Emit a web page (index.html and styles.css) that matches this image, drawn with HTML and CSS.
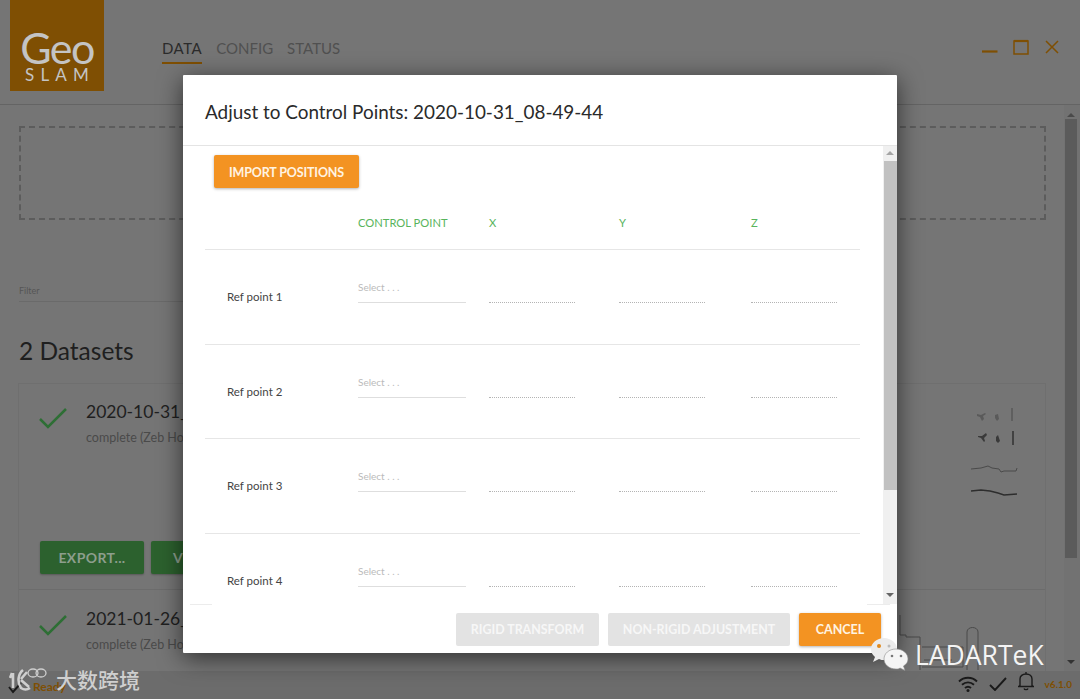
FILE: index.html
```html
<!DOCTYPE html>
<html lang="en">
<head>
<meta charset="utf-8">
<title>GeoSLAM Draw</title>
<link rel="stylesheet" href="styles.css">
</head>
<body>
<div class="app">
  <header class="topbar">
    <div class="logo">
      <span class="logo-geo">Geo</span>
      <span class="logo-slam">SLAM</span>
    </div>
    <nav class="tabs">
      <a class="tab active">DATA</a>
      <a class="tab">CONFIG</a>
      <a class="tab">STATUS</a>
    </nav>
    <div class="winctl">
      <svg width="16" height="16" viewBox="0 0 16 16"><path d="M0 12.5h15.500" class="wstroke"/></svg>
      <svg width="16" height="16" viewBox="0 0 16 16"><path d="M1 2h14v13H1z" class="wthin"/><path d="M1 2h14" class="wstroke"/></svg>
      <svg width="16" height="16" viewBox="0 0 16 16"><path d="M2 2l12 12M14 2L2 14" class="wthin"/></svg>
    </div>
  </header>
  <div class="workarea">
    <main class="content">
      <div class="dropzone"></div>
      <div class="filter"><span>Filter</span></div>
      <h2 class="count">2 Datasets</h2>
      <section class="cards">
        <article class="card card-first">
          <div class="card-head">
            <svg class="tick" width="28" height="22" viewBox="0 0 28 22"><path d="M1 12l8 8L27 2"/></svg>
            <div>
              <div class="ds-name">2020-10-31_08-49-44</div>
              <div class="ds-sub">complete (Zeb Horizon)</div>
            </div>
          </div>
          <div class="card-actions">
            <button class="btn-green">EXPORT...</button>
            <button class="btn-green wide">VISUALISE</button>
          </div>
          <svg class="thumb" width="50" height="92" viewBox="0 0 50 92">
            <path d="M6 6l4 1 4-2 1 1-3 2 1 3-2 2-2-4-3-1zM24 7l3-1 1 5-2 2-2-3z" class="blob1"/>
            <path d="M41 0v13" class="sk1"/>
            <path d="M7 28l4 0 4-3 1 2-3 3 1 3-1 1-3-4-3-1zM25 29l2-2 2 6-2 2-2-2z" class="blob2"/>
            <path d="M42 23v14" class="sk2"/>
            <path d="M0 61l10-1 7-2 4 2 7 1 2 3 3-1 12 0 1-3" class="sk1"/>
            <path d="M0 83l10-1 9 1 8 2 6 2 13-1" class="sk2"/>
          </svg>
        </article>
        <article class="card card-second">
          <div class="card-head">
            <svg class="tick" width="28" height="22" viewBox="0 0 28 22"><path d="M1 12l8 8L27 2"/></svg>
            <div>
              <div class="ds-name">2021-01-26_10-12-30</div>
              <div class="ds-sub">complete (Zeb Horizon)</div>
            </div>
          </div>
          <svg class="plan" width="110" height="62" viewBox="0 0 110 62">
            <path d="M10 5v20h6v2h14v33M32 37h41v20H32M34 50h28M77 60V22c0-6 11-6 11 0v38" class="sk1"/>
          </svg>
        </article>
      </section>
    </main>
    <div class="scrollbar outer">
      <span class="arrow up"></span>
      <span class="thumb-bar"></span>
      <span class="arrow down"></span>
    </div>
  </div>
  <footer class="statusbar">
    <div class="status-left">
      <svg width="14" height="12" viewBox="0 0 14 12"><path d="M1 5l4 5 8-9" class="sb-stroke"/></svg>
      <span class="ready">Ready</span>
    </div>
    <div class="status-right">
      <svg width="20" height="16" viewBox="0 0 20 16"><path d="M1 5.500c5-5 13-5 18 0M4 8.800c3.500-3.300 8.500-3.300 12 0M7 12c1.800-1.600 4.200-1.600 6 0" class="sb-stroke"/><circle cx="10" cy="14.500" r="1.500" fill="#1a1a1a"/></svg>
      <svg width="18" height="14" viewBox="0 0 18 14"><path d="M1 8l5 5L17 1" class="sb-stroke"/></svg>
      <svg class="bell" width="16" height="20" viewBox="0 0 16 20"><path d="M2 14.500V8c0-3 2.500-5 6-5s6 2 6 5v6.500l1.500 1H.5zM8 1v2M6 17.500c.5 1.500 3.500 1.500 4 0" class="sb-stroke thin"/></svg>
      <span class="version">v6.1.0</span>
    </div>
  </footer>

  <div class="modal" role="dialog">
    <div class="modal-head">Adjust to Control Points: 2020-10-31_08-49-44</div>
    <div class="modal-body">
      <div class="modal-scroll">
        <button class="btn-orange import">IMPORT POSITIONS</button>
        <div class="grid head-row">
          <span></span><span>CONTROL POINT</span><span>X</span><span>Y</span><span>Z</span>
        </div>
        <div class="grid row">
          <span class="ref">Ref point 1</span>
          <span class="field select">Select . . .</span><span class="field dotted"></span><span class="field dotted"></span><span class="field dotted"></span>
        </div>
        <div class="grid row">
          <span class="ref">Ref point 2</span>
          <span class="field select">Select . . .</span><span class="field dotted"></span><span class="field dotted"></span><span class="field dotted"></span>
        </div>
        <div class="grid row">
          <span class="ref">Ref point 3</span>
          <span class="field select">Select . . .</span><span class="field dotted"></span><span class="field dotted"></span><span class="field dotted"></span>
        </div>
        <div class="grid row">
          <span class="ref">Ref point 4</span>
          <span class="field select">Select . . .</span><span class="field dotted"></span><span class="field dotted"></span><span class="field dotted"></span>
        </div>
      </div>
      <div class="scrollbar inner">
        <span class="arrow up"></span>
        <span class="thumb-bar"></span>
        <span class="arrow down"></span>
      </div>
    </div>
    <div class="modal-foot">
      <button class="btn-disabled rigid">RIGID TRANSFORM</button>
      <button class="btn-disabled nonrigid">NON-RIGID ADJUSTMENT</button>
      <button class="btn-orange cancel">CANCEL</button>
    </div>
  </div>

  <div class="mark mark-left">
    <svg width="38" height="25" viewBox="0 0 38 25">
      <path d="M3 6L1 11M4 6v15" class="mk"/>
      <path d="M14 3c-5 4-6 12-2 18 3 2 6 2 9 0M12 12l6-7M12 13l8 7" class="mk"/>
      <ellipse cx="24" cy="6" rx="5" ry="4" class="mk thin"/><ellipse cx="32" cy="6" rx="5" ry="4" class="mk thin"/>
    </svg>
    <span>大数跨境</span>
  </div>
  <div class="mark mark-right">
    <svg width="40" height="34" viewBox="0 0 40 34">
      <path d="M14 1C7 1 1 6 1 12c0 3 1.500 6 4 8l-2 5 6-3c2 1 3 1 5 1 7 0 13-5 13-11S21 1 14 1z" fill="#ececec"/>
      <circle cx="9" cy="9" r="2" fill="#e08a1e"/><circle cx="19" cy="9" r="1.500" fill="#bbb"/>
      <path d="M26 12c-7 0-12 4.500-12 10s5 10 12 10c1.500 0 3 0 4-1l5 2.500-1.500-4.500c3-2 4.500-4 4.500-7 0-5.500-5-10-12-10z" fill="#f5f5f5" stroke="#8a8a8a" stroke-width=".6"/>
      <circle cx="22" cy="19" r="1.300" fill="#777"/><circle cx="31" cy="19" r="1.300" fill="#777"/>
    </svg>
    <span>LADARTeK</span>
  </div>
</div>
</body>
</html>
```

FILE: styles.css
```css
* { box-sizing: border-box; }
html, body { margin: 0; padding: 0; }
body { width: 1080px; height: 699px; overflow: hidden; font-family: "Lato", "Noto Sans", sans-serif; }
button { font-family: inherit; border: 0; cursor: default; }

.app { position: relative; width: 1080px; height: 699px; display: flex; flex-direction: column; background: #757575; overflow: hidden; }

/* top bar */
.topbar { flex: 0 0 105px; display: flex; align-items: flex-start; border-bottom: 1px solid #646464; padding-left: 10px; }
.logo { width: 94px; height: 91px; background: #7f4f03; display: flex; flex-direction: column; align-items: center; padding-top: 29px; color: #c4c4c4; }
.logo-geo { font-size: 43px; line-height: 37px; font-weight: 400; letter-spacing: -1.500px; }
.logo-slam { font-size: 17px; line-height: 17px; letter-spacing: 6.200px; font-weight: 400; padding-left: 6px; }
.tabs { display: flex; gap: 14px; margin: 38px 0 0 58px; }
.tab { font-size: 15px; line-height: 20px; color: #505050; padding-bottom: 4px; }
.tab.active { color: #2b2b2b; border-bottom: 2px solid #7f4f03; letter-spacing: .5px; }
.winctl { margin: 39px 0 0 auto; padding-right: 20px; display: flex; gap: 15px; }
.wstroke { fill: none; stroke: #7f4f03; stroke-width: 2.200; }
.wthin { fill: none; stroke: #7f4f03; stroke-width: 1.500; }

/* work area */
.workarea { flex: 1; display: flex; min-height: 0; }
.content { width: 1064px; padding: 21px 19px 0 19px; overflow: hidden; display: flex; flex-direction: column; }
.dropzone { height: 94px; width: 1027px; border: 2px dashed #5c5c5c; flex: none; }
.filter { margin-top: 65px; height: 17px; width: 250px; font-size: 9px; line-height: 12px; color: #555; border-bottom: 1px solid #6a6a6a; flex: none; }
.count { margin: 32px 0 15px; font-size: 24.500px; line-height: 34px; font-weight: 400; color: #1f1f1f; flex: none; }
.cards { width: 1028px; margin-left: -1px; border: 1px solid #6f6f6f; border-bottom: 0; flex: 1; display: flex; flex-direction: column; }
.card { position: relative; padding: 17px 0 0 20px; }
.card-first { height: 206px; border-bottom: 1px solid #6c6c6c; display: flex; flex-direction: column; justify-content: space-between; padding-bottom: 15px; }
.card-second { flex: 1; padding-top: 18px; }
.card-head { display: flex; gap: 19px; }
.tick { margin-top: 6px; fill: none; stroke: #2e6f35; stroke-width: 2.500; flex: none; }
.ds-name { font-size: 17.500px; line-height: 22px; color: #1f1f1f; white-space: nowrap; }
.ds-sub { margin-top: 8px; font-size: 12.500px; line-height: 14px; color: #4a4a4a; white-space: nowrap; }
.card-actions { display: flex; gap: 7px; padding-left: 1px; }
.btn-green { width: 104px; height: 33px; padding: 0; background: #2c612e; color: #8d9e8d; font-size: 14px; font-weight: 700; letter-spacing: .4px; border-radius: 2px; box-shadow: 0 1px 2px rgba(0,0,0,.25); }
.btn-green.wide { width: 130px; text-align: left; padding-left: 22px; }
.thumb { position: absolute; left: 952px; top: 24px; }
.plan { position: absolute; left: 871px; top: 20px; }
.sk1 { fill: none; stroke: #4a4a4a; stroke-width: 1; }
.sk2 { fill: none; stroke: #2d2d2d; stroke-width: 1.400; }
.blob1 { fill: #5a5a5a; }
.blob2 { fill: #3a3a3a; }

/* scrollbars */
.scrollbar { display: flex; flex-direction: column; align-items: center; justify-content: space-between; }
.scrollbar.outer { width: 16px; background: #727272; padding: 3px 2px 3px 0; }
.outer .thumb-bar { flex: 0 0 439px; margin-bottom: auto; width: 12px; background: #5b5b5b; margin-top: 2px; }
.arrow { width: 0; height: 0; border-left: 4px solid transparent; border-right: 4px solid transparent; flex: none; }
.arrow.up { border-bottom: 4px solid #4a4a4a; margin-top: 5px; }
.arrow.down { border-top: 4px solid #333; margin-bottom: 4px; }

/* status bar */
.statusbar { flex: 0 0 28px; background: #6c6c6c; display: flex; align-items: center; justify-content: space-between; padding: 0 8px 0 8px; }
.status-left { display: flex; align-items: center; }
.status-left svg { margin-top: 6px; }
.ready { font-size: 12px; line-height: 14px; color: #7f4f03; margin: 3px 0 0 11px; font-weight: 700; }
.status-right { display: flex; align-items: center; gap: 11px; margin-top: -2px; }
.sb-stroke { fill: none; stroke: #1a1a1a; stroke-width: 1.900; }
.sb-stroke.thin { stroke-width: 1.400; }
.bell { margin-top: -6px; }
.version { font-size: 10px; font-weight: 700; color: #7f4f03; margin-left: 0; }

/* modal layer */
.modal { position: absolute; left: 183px; top: 75px; width: 714px; height: 578px; background: #fff; display: flex; flex-direction: column; box-shadow: 0 5px 24px rgba(0,0,0,.6); border-radius: 1px; }
.modal-head { flex: 0 0 71px; border-bottom: 1px solid #e4e4e4; padding: 25px 0 0 22px; font-size: 18.900px; line-height: 24px; color: #2a2a2a; }
.modal-body { flex: 0 0 458px; display: flex; min-height: 0; }
.modal-scroll { flex: 1; overflow: hidden; padding: 9px 23px 0 22px; }
.scrollbar.inner { width: 14px; background: #f0f0f0; padding: 0 0 3px; }
.inner .thumb-bar { flex: 0 0 329px; width: 13px; background: #c1c1c1; margin-bottom: auto; margin-top: 6px; }
.inner .arrow.up { border-bottom-color: #a5a5a5; margin-top: 5px; }
.inner .arrow.down { border-top-color: #666; }
.modal-foot { flex: 1; display: flex; justify-content: flex-end; gap: 9px; padding: 9px 16px 0 0; background: linear-gradient(to right, #ececec 22px, #fff 22px, #fff 677px, #ececec 677px) top / 700px 1px no-repeat; }

.btn-orange { background: #f39322; color: #fff3e2; font-size: 12.500px; font-weight: 700; height: 33px; border-radius: 2px; box-shadow: 0 1px 3px rgba(0,0,0,.3); padding: 0; white-space: nowrap; }
.import { width: 145px; margin-left: 9px; display: block; letter-spacing: -.15px; padding-top: 2px; }
.cancel { width: 82px; }
.btn-disabled { height: 33px; background: #e3e3e3; color: #f7f7f7; font-size: 12.400px; font-weight: 700; border-radius: 2px; padding: 0; white-space: nowrap; }
.rigid { width: 143px; }
.nonrigid { width: 182px; }

.grid { display: grid; grid-template-columns: 153px 131px 130px 132px 1fr; border-bottom: 1px solid #e6e6e6; }
.head-row { height: 62px; padding-top: 27px; font-size: 11.200px; line-height: 15px; color: #58b45c; }
.row { height: 94.500px; align-items: start; }
.ref { padding: 39px 0 0 22px; font-size: 11.500px; line-height: 15px; color: #444; }
.field { display: block; margin-top: 31px; height: 22px; font-size: 10px; line-height: 12px; color: #bbb; }
.select { width: 108px; border-bottom: 1px solid #dedede; }
.dotted { width: 86px; border-bottom: 1px dotted #b4b4b4; }

/* watermarks */
.mark { position: absolute; display: flex; align-items: center; }
.mark-left { left: 9px; top: 666px; }
.mark-left span { font-family: "Noto Sans CJK SC", sans-serif; font-weight: 500; font-size: 21px; line-height: 26px; margin-left: 9px; color: #cfcfcf; }
.mk { fill: none; stroke: #cfcfcf; stroke-width: 2.600; }
.mk.thin { stroke-width: 1.300; }
.mark-right { left: 870px; top: 635px; gap: 5px; }
.mark-right span { font-family: "Open Sans", sans-serif; font-size: 26.500px; line-height: 34px; color: #f4f4f4; margin-top: 3px; }
```
